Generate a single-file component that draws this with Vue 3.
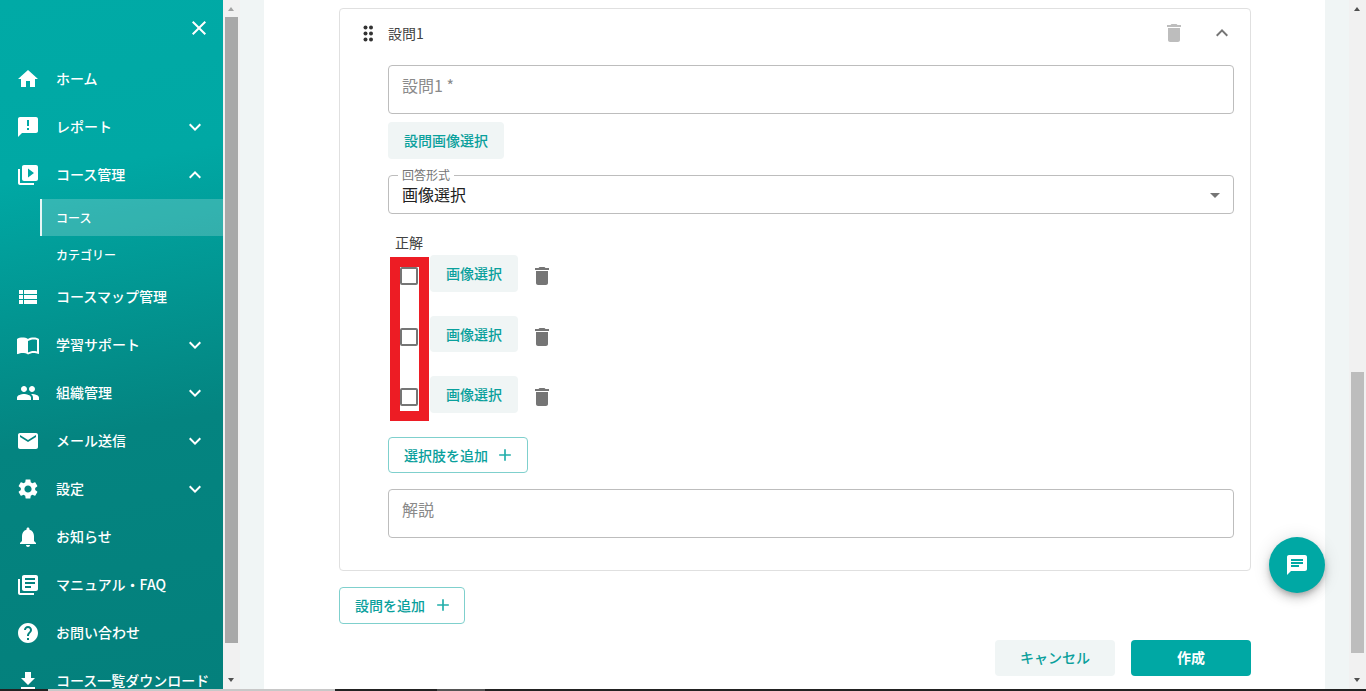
<script setup>
const icons = {
  home: 'M10 20v-6h4v6h5v-8h3L12 3 2 12h3v8z',
  report: 'M20 2H4c-1.1 0-1.99.9-1.99 2L2 22l4-4h14c1.1 0 2-.9 2-2V4c0-1.1-.9-2-2-2zm-7 9h-2V5h2v6zm0 4h-2v-2h2v2z',
  play: 'M4 6H2v14c0 1.1.9 2 2 2h14v-2H4V6zm16-4H8c-1.1 0-2 .9-2 2v12c0 1.1.9 2 2 2h12c1.1 0 2-.9 2-2V4c0-1.1-.9-2-2-2zm-8 12.5v-9l6 4.5-6 4.5z',
  list: 'M3 14h4v-4H3v4zm0 5h4v-4H3v4zM3 9h4V5H3v4zm5 5h13v-4H8v4zm0 5h13v-4H8v4zM8 5v4h13V5H8z',
  book: 'M21 5c-1.11-.35-2.33-.5-3.5-.5-1.95 0-4.05.4-5.5 1.5-1.45-1.1-3.55-1.5-5.5-1.5S2.45 4.9 1 6v14.65c0 .25.25.5.5.5.1 0 .15-.05.25-.05C3.1 20.45 5.05 20 6.5 20c1.95 0 4.05.4 5.5 1.5 1.35-.85 3.8-1.5 5.5-1.5 1.65 0 3.35.3 4.75 1.05.1.05.15.05.25.05.25 0 .5-.25.5-.5V6c-.6-.45-1.25-.75-2-1zm0 13.5c-1.1-.35-2.3-.5-3.5-.5-1.7 0-4.15.65-5.5 1.5V8c1.35-.85 3.8-1.5 5.5-1.5 1.2 0 2.4.15 3.5.5v11.5z',
  people: 'M16 11c1.66 0 2.99-1.34 2.99-3S17.66 5 16 5c-1.66 0-3 1.34-3 3s1.34 3 3 3zm-8 0c1.66 0 2.99-1.34 2.99-3S9.66 5 8 5C6.34 5 5 6.34 5 8s1.34 3 3 3zm0 2c-2.33 0-7 1.17-7 3.5V19h14v-2.5c0-2.33-4.67-3.5-7-3.5zm8 0c-.29 0-.62.02-.97.05 1.16.84 1.97 1.97 1.97 3.45V19h6v-2.5c0-2.33-4.67-3.5-7-3.5z',
  mail: 'M20 4H4c-1.1 0-1.99.9-1.99 2L2 18c0 1.1.9 2 2 2h16c1.1 0 2-.9 2-2V6c0-1.1-.9-2-2-2zm0 4l-8 5-8-5V6l8 5 8-5v2z',
  gear: 'M19.14 12.94c.04-.3.06-.61.06-.94 0-.32-.02-.64-.07-.94l2.03-1.58c.18-.14.23-.41.12-.61l-1.92-3.32c-.12-.22-.37-.29-.59-.22l-2.39.96c-.5-.38-1.03-.7-1.62-.94l-.36-2.54c-.04-.24-.24-.41-.48-.41h-3.84c-.24 0-.43.17-.47.41l-.36 2.54c-.59.24-1.13.57-1.62.94l-2.39-.96c-.22-.08-.47 0-.59.22L2.74 8.87c-.12.21-.08.47.12.61l2.03 1.58c-.05.3-.09.63-.09.94s.02.64.07.94l-2.03 1.58c-.18.14-.23.41-.12.61l1.92 3.32c.12.22.37.29.59.22l2.39-.96c.5.38 1.03.7 1.62.94l.36 2.54c.05.24.24.41.48.41h3.84c.24 0 .44-.17.47-.41l.36-2.54c.59-.24 1.13-.56 1.62-.94l2.39.96c.22.08.47 0 .59-.22l1.92-3.32c.12-.22.07-.47-.12-.61l-2.01-1.58zM12 15.6c-1.98 0-3.6-1.62-3.6-3.6s1.62-3.6 3.6-3.6 3.6 1.62 3.6 3.6-1.62 3.6-3.6 3.6z',
  bell: 'M12 22c1.1 0 2-.9 2-2h-4c0 1.1.9 2 2 2zm6-6v-5c0-3.07-1.63-5.64-4.5-6.32V4c0-.83-.67-1.5-1.5-1.5s-1.5.67-1.5 1.5v.68C7.64 5.36 6 7.92 6 11v5l-2 2v1h16v-1l-2-2z',
  news: 'M4 6H2v14c0 1.1.9 2 2 2h14v-2H4V6zm16-4H8c-1.1 0-2 .9-2 2v12c0 1.1.9 2 2 2h12c1.1 0 2-.9 2-2V4c0-1.1-.9-2-2-2zm-1 9H9V9h10v2zm-4 4H9v-2h6v2zm4-8H9V5h10v2z',
  help: 'M12 2C6.48 2 2 6.48 2 12s4.48 10 10 10 10-4.48 10-10S17.52 2 12 2zm1 17h-2v-2h2v2zm2.07-7.75l-.9.92C13.45 12.9 13 13.5 13 15h-2v-.5c0-1.1.45-2.1 1.17-2.83l1.24-1.26c.37-.36.59-.86.59-1.41 0-1.1-.9-2-2-2s-2 .9-2 2H8c0-2.21 1.79-4 4-4s4 1.79 4 4c0 .88-.36 1.68-.93 2.25z',
  download: 'M19 9h-4V3H9v6H5l7 7 7-7zM5 18v2h14v-2H5z'
}
const down = 'M7.41 8.59 12 13.17l4.59-4.58L18 10l-6 6-6-6z'
const up = 'M7.41 15.41 12 10.83l4.59 4.58L18 14l-6-6-6 6z'
const trash = 'M6 19c0 1.1.9 2 2 2h8c1.1 0 2-.9 2-2V7H6v12zM19 4h-3.5l-1-1h-5l-1 1H5v2h14V4z'
const plus = 'M19 13h-6v6h-2v-6H5v-2h6V5h2v6h6v2z'

const menu = [
  { label: 'ホーム', icon: icons.home },
  { label: 'レポート', icon: icons.report, chevron: down },
  { label: 'コース管理', icon: icons.play, chevron: up },
  { label: 'コース', sub: true, active: true },
  { label: 'カテゴリー', sub: true },
  { label: 'コースマップ管理', icon: icons.list },
  { label: '学習サポート', icon: icons.book, chevron: down },
  { label: '組織管理', icon: icons.people, chevron: down },
  { label: 'メール送信', icon: icons.mail, chevron: down },
  { label: '設定', icon: icons.gear, chevron: down },
  { label: 'お知らせ', icon: icons.bell },
  { label: 'マニュアル・FAQ', icon: icons.news },
  { label: 'お問い合わせ', icon: icons.help },
  { label: 'コース一覧ダウンロード', icon: icons.download }
]
const options = [1, 2, 3]
</script>

<template>
  <div class="page">
    <div class="row">
      <aside class="sidebar">
        <div class="close-row">
          <svg class="close" viewBox="0 0 24 24"><path d="M19 6.41 17.59 5 12 10.59 6.41 5 5 6.41 10.59 12 5 17.59 6.41 19 12 13.41 17.59 19 19 17.59 13.41 12z" /></svg>
        </div>
        <nav class="menu">
          <div v-for="item in menu" :key="item.label" class="item" :class="{ sub: item.sub, active: item.active }">
            <svg v-if="item.icon" class="mi" viewBox="0 0 24 24"><path :d="item.icon" /></svg>
            <span class="label">{{ item.label }}</span>
            <svg v-if="item.chevron" class="chev" viewBox="0 0 24 24"><path :d="item.chevron" /></svg>
          </div>
        </nav>
      </aside>

      <div class="scroll">
        <span class="arrow up"></span>
        <div class="track"><div class="thumb side-thumb"></div></div>
        <span class="arrow dn"></span>
      </div>

      <div class="gutter"></div>

      <main class="content">
        <section class="card">
          <header class="card-head">
            <svg class="drag" viewBox="0 0 11 17">
              <circle v-for="c in [[2.5,2.5],[8,2.5],[2.5,8.5],[8,8.5],[2.5,14.5],[8,14.5]]" :key="c.join()" :cx="c[0]" :cy="c[1]" r="2" />
            </svg>
            <span class="q-title">設問1</span>
            <svg class="head-trash" viewBox="0 0 24 24"><path :d="trash" /></svg>
            <svg class="head-chev" viewBox="0 0 24 24"><path :d="up" /></svg>
          </header>

          <div class="card-body">
            <div class="field tall"><span class="ph">設問1 *</span></div>
            <button class="btn soft q-image">設問画像選択</button>
            <div class="field select">
              <span class="legend">回答形式</span>
              <span class="value">画像選択</span>
              <span class="caret"></span>
            </div>

            <div class="correct">正解</div>
            <div class="options">
              <div class="red-box"></div>
              <div v-for="o in options" :key="o" class="option">
                <span class="check"></span>
                <button class="btn soft pick">画像選択</button>
                <svg class="opt-trash" viewBox="0 0 24 24"><path :d="trash" /></svg>
              </div>
            </div>

            <button class="btn outline add-choice">選択肢を追加<svg class="plus" viewBox="0 0 24 24"><path :d="plus" /></svg></button>
            <div class="field tall explain"><span class="ph">解説</span></div>
          </div>
        </section>

        <button class="btn outline add-q">設問を追加<svg class="plus" viewBox="0 0 24 24"><path :d="plus" /></svg></button>

        <div class="actions">
          <button class="btn soft cancel">キャンセル</button>
          <button class="btn primary">作成</button>
        </div>

        <div class="fab">
          <svg viewBox="0 0 24 24"><path d="M20 2H4c-1.1 0-1.99.9-1.99 2L2 22l4-4h14c1.1 0 2-.9 2-2V4c0-1.1-.9-2-2-2zM6 9h12v2H6V9zm8 5H6v-2h8v2zm4-6H6V6h12v2z" /></svg>
        </div>
      </main>

      <div class="gutter"></div>

      <div class="scroll">
        <span class="arrow up dark"></span>
        <div class="track"><div class="thumb main-thumb"></div></div>
        <span class="arrow dn"></span>
      </div>
    </div>

    <div class="taskbar">
      <span class="seg s1"></span>
      <span class="seg s2"></span>
      <span class="seg s3"></span>
      <span class="seg s4"></span>
    </div>
  </div>
</template>

<style scoped>
.page {
  display: flex;
  flex-direction: column;
  width: 1366px;
  height: 691px;
  overflow: hidden;
  background: #fff;
  font-family: "Noto Sans CJK JP", "Noto Sans", sans-serif;
  color: #333;
}
.row { flex: none; display: flex; height: 689px; }
.sidebar {
  flex: none;
  width: 223px;
  height: 689px;
  overflow: hidden;
  background: linear-gradient(170deg, #00aaa6 0%, #00a8a4 25%, #048480 62%, #04807c 100%);
  color: #fff;
}
.close-row { display: flex; justify-content: flex-end; height: 55px; padding: 16px 12px 0 0; box-sizing: border-box; }
.close { width: 24px; height: 24px; fill: #fff; }
.menu { display: flex; flex-direction: column; }
.item { position: relative; display: flex; align-items: center; height: 48px; font-size: 14px; font-weight: 500; flex: none; }
.item.sub { height: 37px; margin-left: 40px; padding-left: 16px; font-size: 12px; }
.item.active { background: rgba(255, 255, 255, .2); border-left: 2px solid #e6f7f6; padding-left: 14px; }
.mi { position: absolute; left: 16px; top: 12px; width: 24px; height: 24px; fill: #fff; }
.label { margin-left: 56px; margin-bottom: 2px; white-space: nowrap; }
.sub .label { margin-left: 0; margin-bottom: 0; }
.chev { position: absolute; right: 16px; top: 12px; width: 24px; height: 24px; fill: #fff; }

.scroll { flex: none; width: 17px; display: flex; flex-direction: column; background: #f1f1f1; }
.arrow { flex: none; height: 17px; position: relative; }
.arrow::after { content: ""; position: absolute; left: 5px; border-left: 3.5px solid transparent; border-right: 3.5px solid transparent; }
.arrow.up::after { top: 7px; border-bottom: 4px solid #a3a3a3; }
.arrow.dn::after { top: 6px; border-top: 4px solid #505050; }
.arrow.up.dark::after { border-bottom-color: #505050; }
.track { flex: 1; position: relative; }
.thumb { position: absolute; left: 2px; right: 2px; }
.side-thumb { top: 0; height: 626px; background: #a8a8a8; }
.main-thumb { top: 355px; height: 281px; background: #bdbdbd; }

.gutter { flex: none; width: 24px; background: #f0f5f5; }
.content {
  position: relative;
  flex: none;
  width: 1061px;
  height: 689px;
  box-sizing: border-box;
  padding: 8px 74px 0 75px;
  background: #fff;
}
.card {
  height: 563px;
  box-sizing: border-box;
  border: 1px solid #e0e0e0;
  border-radius: 4px;
  padding: 0 16px 0 48px;
}
.card-head { display: flex; align-items: center; height: 48px; margin-bottom: 8px; position: relative; }
.drag { position: absolute; left: -25px; top: 16px; width: 11px; height: 17px; fill: #333; }
.q-title { font-size: 14px; color: #424242; }
.head-trash { margin-left: auto; width: 24px; height: 24px; fill: #bdbdbd; margin-right: 24px; }
.head-chev { width: 24px; height: 24px; fill: #757575; }

.field { position: relative; box-sizing: border-box; border: 1px solid #bdbdbd; border-radius: 4px; }
.tall { height: 49px; padding: 7px 13px; }
.ph { display: block; font-size: 16px; color: #8a8a8a; line-height: 24px; }
.btn { display: flex; align-items: center; justify-content: center; box-sizing: border-box; border-radius: 4px; font-family: inherit; font-size: 14px; font-weight: 500; border: 0; padding: 0; }
.soft { background: #f0f5f5; color: #0aa09c; padding-bottom: 2px; }
.q-image { width: 116px; height: 37px; margin-top: 8px; }
.select { height: 39px; margin-top: 16px; }
.legend { position: absolute; left: 9px; top: -9px; padding: 0 4px; background: #fff; font-size: 12px; line-height: 16px; color: #757575; }
.value { position: absolute; left: 13px; top: 6px; font-size: 16px; line-height: 24px; color: #212121; }
.caret { position: absolute; right: 13px; top: 17px; border-left: 5px solid transparent; border-right: 5px solid transparent; border-top: 5px solid #757575; }
.correct { margin: 20px 0 0 7px; font-size: 14px; line-height: 16px; height: 20px; color: #424242; }

.options { position: relative; height: 164px; margin-top: 3px; display: flex; flex-direction: column; }
.red-box { position: absolute; left: 2px; top: 0; width: 39px; height: 164px; box-sizing: border-box; border: 10px solid #ed1c24; }
.option { position: relative; flex: none; height: 37px; margin-bottom: 23.5px; }
.check { position: absolute; left: 12px; top: 10px; width: 18px; height: 18px; box-sizing: border-box; border: 2px solid #757575; border-radius: 2px; background: #fff; }
.pick { position: absolute; left: 42px; top: -2px; width: 88px; height: 37px; }
.option:nth-child(3) .pick { height: 36px; padding-bottom: 0; }
.opt-trash { position: absolute; left: 142px; top: 7px; width: 24px; height: 24px; fill: #757575; }

.outline { background: #fff; border: 1px solid #7fd0cd; color: #0aa09c; gap: 7px; justify-content: flex-start; padding-left: 15px; }
.plus { width: 20px; height: 20px; fill: #22aeaa; }
.add-choice { width: 140px; height: 36px; margin-top: 16px; }
.explain { margin-top: 16px; }
.add-q { width: 126px; height: 37px; margin-top: 16px; padding-bottom: 2px; gap: 8px; }
.actions { display: flex; justify-content: flex-end; gap: 16px; margin-top: 16px; }
.actions .btn { width: 120px; height: 36px; }
.primary { background: #00a8a4; color: #fff; font-weight: 700; padding-bottom: 2px; }
.fab { position: absolute; left: 1005px; top: 537px; width: 56px; height: 56px; border-radius: 50%; background: #00a8a4; box-shadow: 0 3px 5px -1px rgba(0,0,0,.2), 0 6px 10px rgba(0,0,0,.14), 0 1px 18px rgba(0,0,0,.12); display: flex; align-items: center; justify-content: center; }
.fab svg { width: 24px; height: 24px; fill: #fff; }
.taskbar { flex: none; display: flex; height: 2px; background: #222; }
.seg { flex: none; height: 2px; }
.s1 { width: 48px; }
.s2 { width: 287px; background: #c8c8c8; }
.s3 { width: 102px; }
.s4 { width: 48px; background: #555; }
</style>
